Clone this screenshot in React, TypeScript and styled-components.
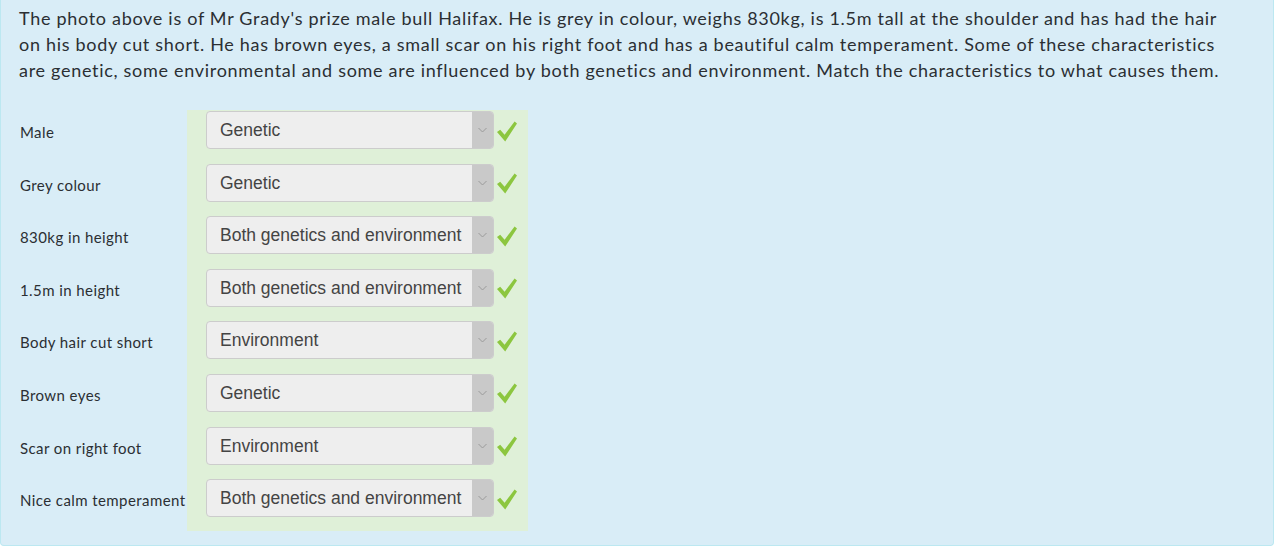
import styled, { createGlobalStyle } from "styled-components";

const GlobalStyle = createGlobalStyle`
  body {
    margin: 0;
    background: #ffffff;
    font-family: "Lato", "Open Sans", sans-serif;
  }
`;

const Panel = styled.div`
  width: 1274px;
  height: 546px;
  box-sizing: border-box;
  background: #d9edf7;
  border: 1px solid #bce8f1;
  border-top: none;
  border-radius: 0 0 4px 4px;
  padding: 5px 18px 0 18px;
  color: #2b2f33;
`;

const Question = styled.p`
  margin: 0;
  font-size: 18px;
  line-height: 26px;
  letter-spacing: 0.7px;
  width: 1215px;
`;

const Table = styled.div`
  display: grid;
  grid-template-columns: 168px 341px;
  margin-top: 27px;
`;

const Label = styled.div`
  height: 52.6px;
  box-sizing: border-box;
  padding-top: 12px;
  padding-left: 1px;
  font-size: 15px;
  line-height: 20px;
  letter-spacing: 0.42px;
  white-space: nowrap;
`;

const AnswerCell = styled.div`
  height: 52.6px;
  box-sizing: border-box;
  background: #dff0d8;
  padding: 1px 0 0 19px;
  display: flex;
  align-items: flex-start;
`;

const Select = styled.div`
  width: 288px;
  height: 38px;
  box-sizing: border-box;
  border: 1px solid #cccccc;
  border-radius: 4px;
  background: #eeeeee;
  display: flex;
  overflow: hidden;
`;

const SelectText = styled.div`
  flex: 1;
  padding-left: 13px;
  font-family: "Liberation Sans", Arial, sans-serif;
  font-size: 17.5px;
  line-height: 37px;
  color: #444444;
  white-space: nowrap;
`;

const Arrow = styled.div`
  width: 21px;
  background: #c9c9c9;
  display: flex;
  align-items: center;
  justify-content: center;
`;

const Tick = styled.div`
  width: 25px;
  height: 38px;
  display: flex;
  align-items: center;
  justify-content: center;
  padding-top: 1px;
`;

const rows = [
  ["Male", "Genetic"],
  ["Grey colour", "Genetic"],
  ["830kg in height", "Both genetics and environment"],
  ["1.5m in height", "Both genetics and environment"],
  ["Body hair cut short", "Environment"],
  ["Brown eyes", "Genetic"],
  ["Scar on right foot", "Environment"],
  ["Nice calm temperament", "Both genetics and environment"],
];

function Chevron() {
  return (
    <svg width="9" height="6" viewBox="0 0 9 6">
      <path d="M0.5 1 L4.5 5 L8.5 1" fill="none" stroke="#9a9a9a" strokeWidth="1" />
    </svg>
  );
}

function Check() {
  return (
    <svg width="20" height="21" viewBox="0 0 20 21">
      <path d="M0 11 L3.2 8.8 L7.6 13.8 L17.6 0.5 L20 2.4 L8.2 20.5 Z" fill="#8cc63f" />
    </svg>
  );
}

export default function App() {
  return (
    <>
      <GlobalStyle />
      <Panel>
        <Question>
          The photo above is of Mr Grady's prize male bull Halifax. He is grey in colour, weighs
          830kg, is 1.5m tall at the shoulder and has had the hair on his body cut short. He has
          brown eyes, a small scar on his right foot and has a beautiful calm temperament. Some of
          these characteristics are genetic, some environmental and some are influenced by both
          genetics and environment. Match the characteristics to what causes them.
        </Question>
        <Table>
          {rows.map(([label, answer]) => (
            <>
              <Label key={label + "-l"}>{label}</Label>
              <AnswerCell key={label + "-a"}>
                <Select>
                  <SelectText>{answer}</SelectText>
                  <Arrow>
                    <Chevron />
                  </Arrow>
                </Select>
                <Tick>
                  <Check />
                </Tick>
              </AnswerCell>
            </>
          ))}
        </Table>
      </Panel>
    </>
  );
}
